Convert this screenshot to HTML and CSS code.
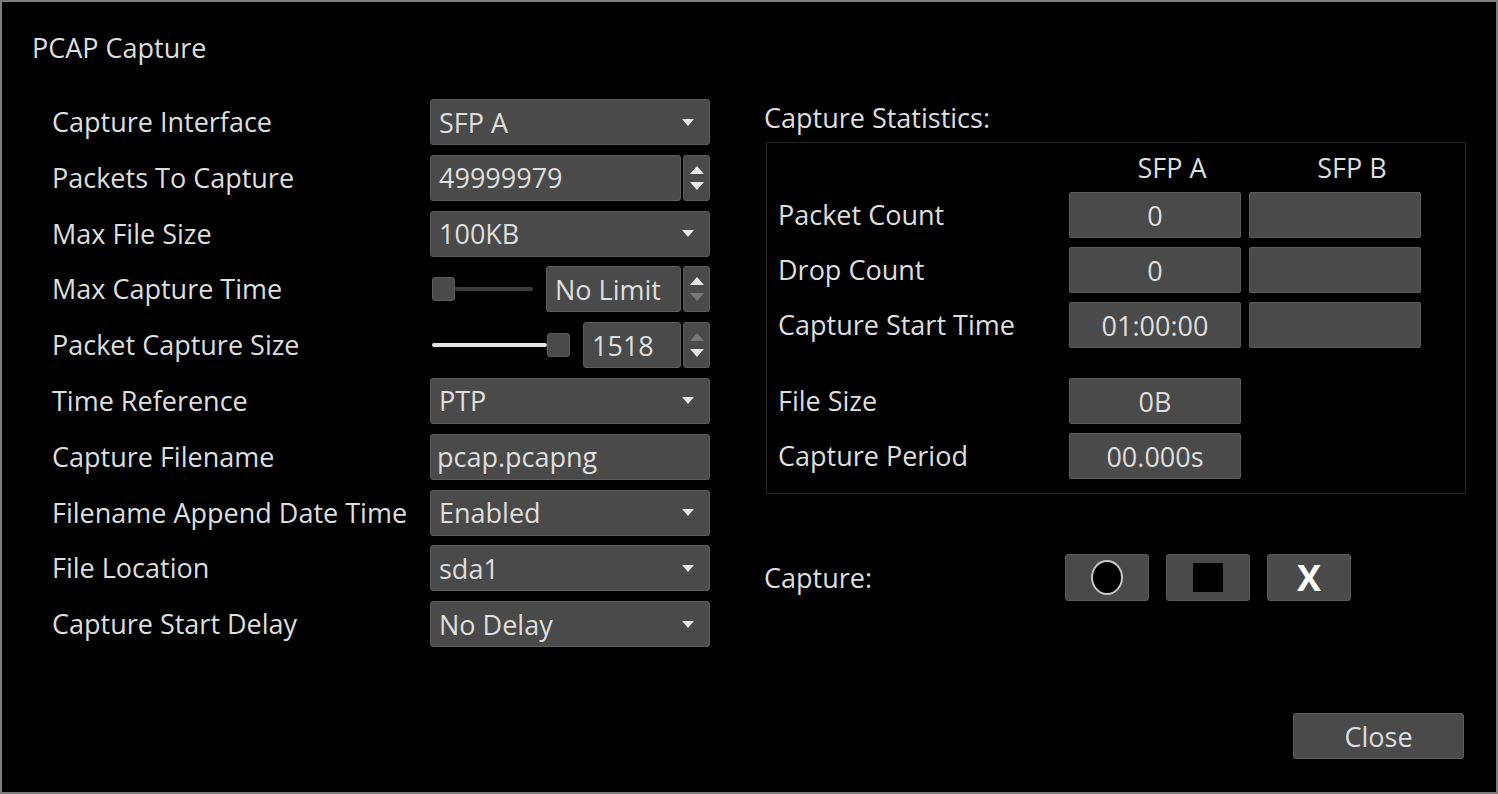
FILE: index.html
```html
<!DOCTYPE html>
<html>
<head>
<meta charset="utf-8">
<link rel="stylesheet" href="styles.css">
</head>
<body>
<div class="dialog">
  <div class="title">PCAP Capture</div>
  <div class="main">
    <div class="form">
      <div class="label">Capture Interface</div>
      <div class="ctrl select"><span>SFP A</span><i class="caret"></i></div>

      <div class="label">Packets To Capture</div>
      <div class="ctrl spin-row">
        <div class="box num">49999979</div>
        <div class="spinner"><i class="up"></i><i class="down"></i></div>
      </div>

      <div class="label">Max File Size</div>
      <div class="ctrl select"><span>100KB</span><i class="caret"></i></div>

      <div class="label">Max Capture Time</div>
      <div class="ctrl spin-row">
        <div class="slider s-min"><div class="handle"></div><div class="track dark"></div></div>
        <div class="box num">No Limit</div>
        <div class="spinner"><i class="up"></i><i class="down dim"></i></div>
      </div>

      <div class="label">Packet Capture Size</div>
      <div class="ctrl spin-row">
        <div class="slider s-max"><div class="track light"></div><div class="handle"></div></div>
        <div class="box num">1518</div>
        <div class="spinner"><i class="up dim"></i><i class="down"></i></div>
      </div>

      <div class="label">Time Reference</div>
      <div class="ctrl select"><span>PTP</span><i class="caret"></i></div>

      <div class="label">Capture Filename</div>
      <div class="ctrl box text">pcap.pcapng</div>

      <div class="label">Filename Append Date Time</div>
      <div class="ctrl select"><span>Enabled</span><i class="caret"></i></div>

      <div class="label">File Location</div>
      <div class="ctrl select"><span>sda1</span><i class="caret"></i></div>

      <div class="label">Capture Start Delay</div>
      <div class="ctrl select"><span>No Delay</span><i class="caret"></i></div>
    </div>

    <div class="right">
      <div class="rlabel">Capture Statistics:</div>
      <div class="stats">
        <div class="hdr"></div>
        <div class="hdr">SFP A</div>
        <div class="hdr">SFP B</div>

        <div class="slabel">Packet Count</div>
        <div class="cell">0</div>
        <div class="cell"></div>

        <div class="slabel">Drop Count</div>
        <div class="cell">0</div>
        <div class="cell"></div>

        <div class="slabel">Capture Start Time</div>
        <div class="cell">01:00:00</div>
        <div class="cell"></div>

        <div class="spacer"></div>

        <div class="slabel">File Size</div>
        <div class="cell">0B</div>
        <div class="empty"></div>

        <div class="slabel">Capture Period</div>
        <div class="cell">00.000s</div>
        <div class="empty"></div>
      </div>

      <div class="capture">
        <div class="rlabel cap-label">Capture:</div>
        <div class="btns">
          <div class="btn"><span class="ico-circle"></span></div>
          <div class="btn"><span class="ico-square"></span></div>
          <div class="btn"><span class="ico-x">X</span></div>
        </div>
      </div>
    </div>
  </div>
  <div class="footer">
    <div class="btn close">Close</div>
  </div>
</div>
</body>
</html>
```

FILE: styles.css
```css
* { box-sizing: border-box; }
html, body { margin: 0; padding: 0; background: #000; }
body {
  width: 1498px;
  height: 794px;
  font-family: "Open Sans", "DejaVu Sans", sans-serif;
  color: #dedede;
  font-size: 27px;
  overflow: hidden;
}
.dialog {
  width: 1498px;
  height: 794px;
  border: 2px solid #7c7c7c;
  display: flex;
  flex-direction: column;
}
.title {
  padding: 29px 0 0 30px;
  height: 63px;
  line-height: 34px;
  font-size: 27px;
}
.main {
  display: flex;
  padding: 34px 0 0 50px;
  flex: 1;
}
.form {
  display: grid;
  grid-template-columns: 378px 280px;
  grid-auto-rows: 46px;
  row-gap: 9.8px;
  align-items: center;
}
.label { line-height: 34px; white-space: nowrap; }
.ctrl { height: 46px; }
.box, .select, .cell, .btn, .handle, .spinner {
  background: #4a4a4a;
  border: 1px solid #5c5c5c;
  border-radius: 3px;
}
.select {
  display: flex;
  align-items: center;
  justify-content: space-between;
  padding: 0 15px 0 8px;
}
.caret {
  width: 0; height: 0;
  border-left: 6px solid transparent;
  border-right: 6px solid transparent;
  border-top: 7px solid #e6e6e6;
}
.box {
  height: 46px;
  display: flex;
  align-items: center;
  padding: 0 8px;
}
.spin-row {
  display: flex;
  align-items: center;
  gap: 2px;
}
.spin-row .num { flex: 1; }
.spinner {
  width: 27px;
  height: 46px;
  display: flex;
  flex-direction: column;
  align-items: center;
  justify-content: center;
  gap: 8px;
}
.spinner .up {
  width: 0; height: 0;
  border-left: 7px solid transparent;
  border-right: 7px solid transparent;
  border-bottom: 8px solid #e6e6e6;
}
.spinner .down {
  width: 0; height: 0;
  border-left: 7px solid transparent;
  border-right: 7px solid transparent;
  border-top: 8px solid #e6e6e6;
}
.spinner .up.dim { border-bottom-color: #777; }
.spinner .down.dim { border-top-color: #777; }
.slider {
  display: flex;
  align-items: center;
  height: 46px;
  padding-left: 2px;
}
.s-min { width: 114px; }
.s-max { width: 151px; }
.handle {
  width: 23px;
  height: 24px;
  flex: none;
}
.track { height: 4px; border-radius: 2px; }
.track.dark { width: 78px; background: #3c3c3c; }
.track.light { width: 115px; background: #e4e4e4; }
.text { padding-left: 6px; }

.right {
  margin-left: 54px;
  width: 702px;
  padding-top: 2px;
}
.rlabel { line-height: 34px; font-size: 27px; }
.stats {
  margin-top: 7px;
  border: 1px solid #262626;
  width: 700px;
  margin-left: 2px;
  padding: 10px 0 14px 11px;
  display: grid;
  grid-template-columns: 283px 172px 172px;
  column-gap: 8px;
  grid-template-rows: 30px 46px 46px 46px 12px 46px 46px;
  row-gap: 9px;
  align-items: center;
  font-size: 27px;
}
.spacer { grid-column: 1 / -1; }
.hdr { text-align: center; line-height: 30px; padding-left: 34px; white-space: nowrap; }
.slabel { line-height: 34px; white-space: nowrap; }
.cell {
  height: 46px;
  display: flex;
  align-items: center;
  justify-content: center;
  border-radius: 2px;
}
.capture {
  display: flex;
  align-items: center;
  margin-top: 60px;
}
.cap-label { width: 301px; }
.btns { display: flex; gap: 17px; }
.btn {
  width: 84px;
  height: 47px;
  display: flex;
  align-items: center;
  justify-content: center;
}
.ico-circle {
  width: 32px; height: 35px;
  border-radius: 50%;
  background: #000;
  border: 2px solid #c8c8c8;
}
.ico-square {
  width: 30px; height: 29px;
  background: #000;
}
.ico-x {
  color: #fff;
  font-weight: bold;
  font-size: 36px;
  line-height: 1;
}
.footer {
  display: flex;
  justify-content: flex-end;
  padding: 0 32px 33px 0;
}
.close {
  width: 171px;
  height: 46px;
  font-size: 27px;
}
```
